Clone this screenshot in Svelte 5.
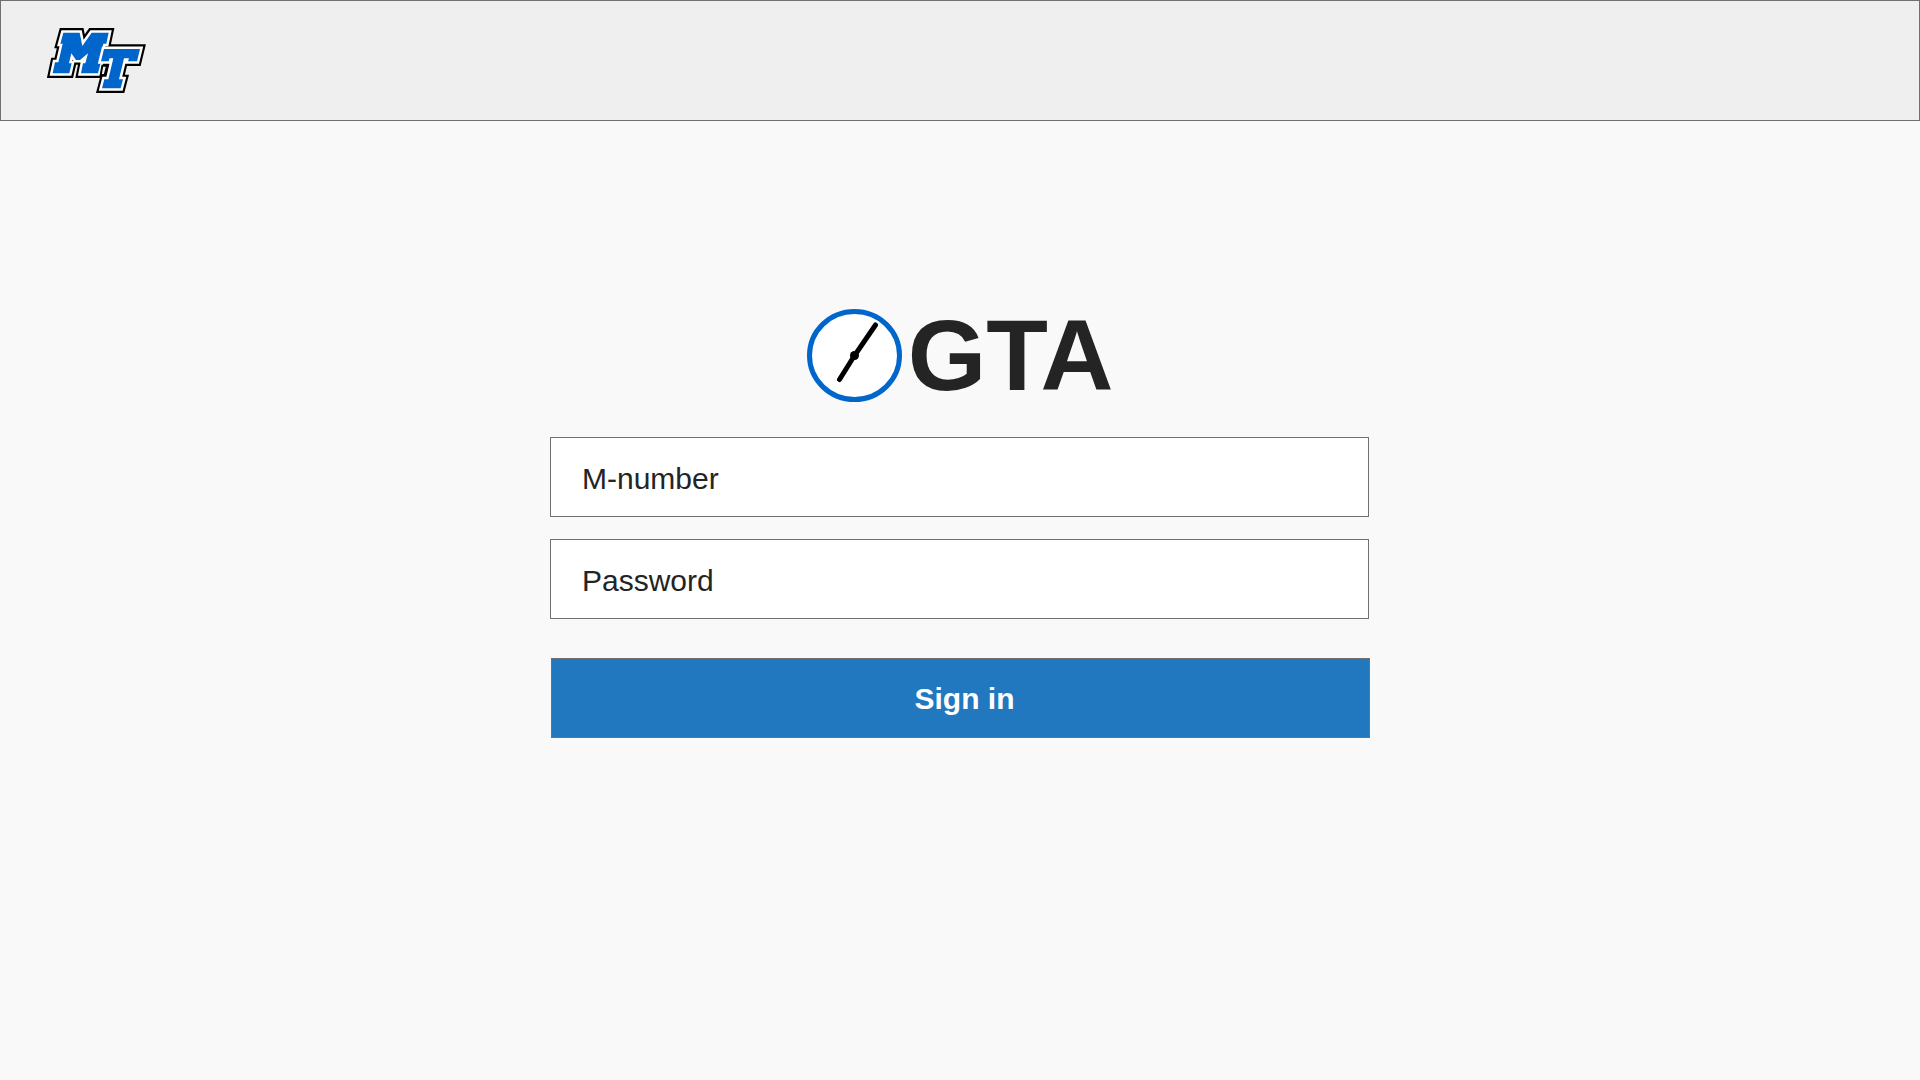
<script lang="ts">
  let mNumber = $state('');
  let password = $state('');
</script>

<div class="page">
  <header class="topbar">
    <a class="brand" href="/" aria-label="MT home">
      <svg viewBox="141 84 297 195" aria-hidden="true">
        <defs>
          <path
            id="letter-m"
            d="M190 98H239L247 138L275 98H326L319 131H310L297 189H302L294 220H243L249 190H256L264 160L240 180H228L214 160L207 190H215L208 220H158L165 187H175L188 131H181Z"
          />
          <path
            id="letter-t"
            d="M312 147H420L411 184H384L387 175H372L357 238H369L362 265H306L313 238H325L340 175H329L326 184H303Z"
          />
        </defs>
        <use href="#letter-m" class="edge" />
        <use href="#letter-t" class="edge" />
        <use href="#letter-m" class="rim" />
        <use href="#letter-m" class="fill" />
        <use href="#letter-t" class="rim" />
        <use href="#letter-t" class="fill" />
        <path class="hole" d="M307 197H321L314 225H302Z" />
      </svg>
    </a>
  </header>

  <main>
    <h1>
      <svg class="clock" viewBox="0 0 95 93" aria-hidden="true">
        <ellipse cx="47.5" cy="46.5" rx="45" ry="44" />
        <path d="M68.5 16L47.5 46.5L32.5 70.5" class="hands" />
        <circle cx="47.5" cy="46.5" r="4.5" class="hub" />
      </svg>
      <span>GTA</span>
    </h1>

    <form onsubmit={(e) => e.preventDefault()}>
      <div class="fields">
        <input type="text" aria-label="M-number" placeholder="M-number" bind:value={mNumber} />
        <input type="password" aria-label="Password" placeholder="Password" bind:value={password} />
      </div>
      <div class="actions">
        <button type="submit">Sign in</button>
      </div>
    </form>
  </main>
</div>

<style>
  :global(body) {
    margin: 0;
    background: #f9f9f9;
  }

  .page {
    min-height: 100vh;
    color: #242424;
    font-family: 'Liberation Sans', Arial, Helvetica, sans-serif;
  }

  .topbar {
    box-sizing: border-box;
    display: flex;
    align-items: center;
    padding: 27px 46px;
    border: 1px solid #707070;
    background: #efefef;
  }

  .brand {
    display: block;
  }

  .brand svg {
    display: block;
    width: 99px;
    height: 65px;
    overflow: visible;
  }

  .edge {
    fill: #000;
    stroke: #000;
    stroke-width: 28px;
  }

  .rim {
    fill: #fff;
    stroke: #fff;
    stroke-width: 15px;
  }

  .fill {
    fill: #0066cc;
  }

  .hole {
    fill: #efefef;
    stroke: #000;
    stroke-width: 6px;
  }

  main {
    display: flex;
    flex-direction: column;
    align-items: center;
    padding: 180px 24px 48px;
  }

  h1 {
    display: flex;
    align-items: center;
    gap: 6px;
    margin: 0;
    font-size: 101px;
    line-height: 108px;
    font-weight: 700;
  }

  .clock {
    width: 95px;
    height: 93px;
  }

  .clock ellipse {
    fill: #fff;
    stroke: #0066cc;
    stroke-width: 5px;
  }

  .hands {
    fill: none;
    stroke: #000;
    stroke-width: 5px;
    stroke-linecap: round;
  }

  form {
    box-sizing: border-box;
    display: flex;
    flex-direction: column;
    gap: 39px;
    width: 100%;
    max-width: 820px;
    margin-top: 28px;
  }

  .fields {
    display: flex;
    flex-direction: column;
    gap: 22px;
    padding-right: 1px;
  }

  .actions {
    padding-left: 1px;
  }

  input,
  button {
    box-sizing: border-box;
    display: block;
    width: 100%;
    height: 80px;
    margin: 0;
    border: 1px solid #707070;
    border-radius: 0;
    font-family: inherit;
    font-size: 30px;
    line-height: 36px;
  }

  input {
    padding: 4px 31px 0;
    background: #fff;
    color: #242424;
  }

  input::placeholder {
    color: #242424;
    opacity: 1;
  }

  button {
    padding: 2px 0 0 8px;
    background: #2178be;
    color: #fff;
    font-weight: 700;
    cursor: pointer;
  }
</style>
